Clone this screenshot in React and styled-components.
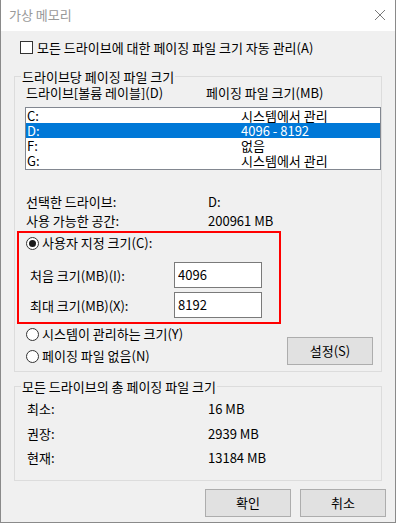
import React from 'react';
import styled, { createGlobalStyle } from 'styled-components';

const GlobalStyle = createGlobalStyle`
    * {
        box-sizing: border-box;
    }
    body {
        margin: 0;
        background: #ffffff;
        font-family: 'Noto Sans CJK KR', 'Noto Sans', sans-serif;
        font-size: 13px;
        color: #000000;
    }
`;

const drives = [
    { name: 'C:', size: '시스템에서 관리' },
    { name: 'D:', size: '4096 - 8192', selected: true },
    { name: 'F:', size: '없음' },
    { name: 'G:', size: '시스템에서 관리' },
];

const totals = [
    { label: '최소:', value: '16 MB' },
    { label: '권장:', value: '2939 MB' },
    { label: '현재:', value: '13184 MB' },
];

const App = () => {
    return (
        <>
            <GlobalStyle />
            <Window>
                <TitleBar>
                    <Title>가상 메모리</Title>
                    <CloseIcon width='12' height='12' viewBox='0 0 12 12'>
                        <path d='M1 1 L11 11 M11 1 L1 11' />
                    </CloseIcon>
                </TitleBar>

                <Body>
                    <CheckRow>
                        <CheckBox />
                        <span>모든 드라이브에 대한 페이징 파일 크기 자동 관리(A)</span>
                    </CheckRow>

                    <GroupBox $marginTop={22} $paddingBottom={6}>
                        <Legend>드라이브당 페이징 파일 크기</Legend>
                        <HeaderRow>
                            <span>드라이브[볼륨 레이블](D)</span>
                            <span>페이징 파일 크기(MB)</span>
                        </HeaderRow>

                        <ListBox>
                            {drives.map((d) => (
                                <ListRow key={d.name} $selected={d.selected}>
                                    <span>{d.name}</span>
                                    <span>{d.size}</span>
                                </ListRow>
                            ))}
                        </ListBox>

                        <InfoRow $marginTop={24}>
                            <span>선택한 드라이브:</span>
                            <span>D:</span>
                        </InfoRow>
                        <InfoRow $marginTop={3}>
                            <span>사용 가능한 공간:</span>
                            <span>200961 MB</span>
                        </InfoRow>

                        <RedFrame>
                            <RadioRow>
                                <RadioMark $checked />
                                <span>사용자 지정 크기(C):</span>
                            </RadioRow>
                            <SizeRow $marginTop={11}>
                                <SizeLabel>처음 크기(MB)(I):</SizeLabel>
                                <TextInput defaultValue='4096' />
                            </SizeRow>
                            <SizeRow $marginTop={4}>
                                <SizeLabel>최대 크기(MB)(X):</SizeLabel>
                                <TextInput defaultValue='8192' />
                            </SizeRow>
                        </RedFrame>

                        <ChoiceRow>
                            <ChoiceColumn>
                                <RadioRow>
                                    <RadioMark />
                                    <span>시스템이 관리하는 크기(Y)</span>
                                </RadioRow>
                                <RadioRow>
                                    <RadioMark />
                                    <span>페이징 파일 없음(N)</span>
                                </RadioRow>
                            </ChoiceColumn>
                            <SetButton>설정(S)</SetButton>
                        </ChoiceRow>
                    </GroupBox>

                    <GroupBox $marginTop={14} $paddingBottom={14}>
                        <Legend>모든 드라이브의 총 페이징 파일 크기</Legend>
                        <TotalList>
                            {totals.map((t) => (
                                <TotalRow key={t.label}>
                                    <span>{t.label}</span>
                                    <span>{t.value}</span>
                                </TotalRow>
                            ))}
                        </TotalList>
                    </GroupBox>

                    <ButtonBar>
                        <PushButton>확인</PushButton>
                        <PushButton>취소</PushButton>
                    </ButtonBar>
                </Body>
            </Window>
        </>
    );
};

const Window = styled.div`
    width: 396px;
    height: 523px;
    background: #f0f0f0;
    border: 1px solid #8a8a8a;
    border-top: none;
    display: flex;
    flex-direction: column;
`;

const TitleBar = styled.div`
    height: 31px;
    background: #ffffff;
    display: flex;
    align-items: center;
    justify-content: space-between;
    padding: 0 8px 1px 8px;
`;

const Title = styled.span`
    color: #999999;
    line-height: 16px;
`;

const CloseIcon = styled.svg`
    margin-right: 1px;
    path {
        stroke: #7a7a7a;
        stroke-width: 1;
        fill: none;
    }
`;

const Body = styled.div`
    padding: 0 13px;
    display: flex;
    flex-direction: column;
`;

const CheckRow = styled.div`
    margin-top: 10px;
    height: 13px;
    padding-left: 6px;
    display: flex;
    align-items: center;
    gap: 4px;
    line-height: 16px;
    white-space: nowrap;
`;

const CheckBox = styled.span`
    width: 13px;
    height: 13px;
    flex: none;
    background: #ffffff;
    border: 1px solid #333333;
`;

const GroupBox = styled.div`
    margin-top: ${(p) => p.$marginTop}px;
    border: 1px solid #dcdcdc;
    padding-bottom: ${(p) => p.$paddingBottom}px;
    display: flex;
    flex-direction: column;
`;

const Legend = styled.span`
    align-self: flex-start;
    margin: -8px 0 0 6px;
    padding: 0 1px;
    background: #f0f0f0;
    line-height: 16px;
    white-space: nowrap;
`;

const HeaderRow = styled.div`
    display: grid;
    grid-template-columns: 180px 1fr;
    padding-left: 11px;
    line-height: 16px;
`;

const ListBox = styled.div`
    margin: 6px 0 0 10px;
    height: 63px;
    background: #ffffff;
    border: 1px solid #828790;
`;

const ListRow = styled.div`
    display: grid;
    grid-template-columns: 214px 1fr;
    height: 15px;
    line-height: 15px;
    padding-left: 1px;
    white-space: nowrap;
    background: ${(p) => (p.$selected ? '#0078d7' : 'transparent')};
    color: ${(p) => (p.$selected ? '#ffffff' : '#000000')};
`;

const InfoRow = styled.div`
    margin-top: ${(p) => p.$marginTop}px;
    display: grid;
    grid-template-columns: 182px 1fr;
    padding-left: 11px;
    line-height: 16px;
`;

const RedFrame = styled.div`
    margin: 2px 0 0 2px;
    width: 264px;
    height: 93px;
    border: 2px solid #ff0000;
    padding: 2px 0 0 7px;
    display: flex;
    flex-direction: column;
`;

const RadioRow = styled.div`
    display: flex;
    align-items: center;
    gap: 3px;
    height: 16px;
    line-height: 16px;
    white-space: nowrap;
`;

const RadioMark = styled.span`
    position: relative;
    width: 13px;
    height: 13px;
    flex: none;
    border-radius: 50%;
    background: #ffffff;
    border: 1px solid #333333;
    &::after {
        content: '';
        display: ${(p) => (p.$checked ? 'block' : 'none')};
        position: absolute;
        left: 2px;
        top: 2px;
        width: 7px;
        height: 7px;
        border-radius: 50%;
        background: #1a1a1a;
    }
`;

const SizeRow = styled.div`
    margin-top: ${(p) => p.$marginTop}px;
    display: flex;
    align-items: center;
    padding-left: 4px;
`;

const SizeLabel = styled.span`
    width: 144px;
    line-height: 16px;
    padding-top: 1px;
`;

const TextInput = styled.input`
    width: 88px;
    height: 26px;
    border: 1px solid #7a7a7a;
    background: #ffffff;
    padding: 0 0 2px 3px;
    font: inherit;
    font-size: 13px;
    color: #000000;
    outline: none;
`;

const ChoiceRow = styled.div`
    margin-top: 2px;
    display: flex;
    justify-content: space-between;
    align-items: flex-start;
    padding-left: 11px;
`;

const ChoiceColumn = styled.div`
    display: flex;
    flex-direction: column;
    gap: 6px;
`;

const PushButton = styled.button`
    width: 86px;
    height: 28px;
    background: #e1e1e1;
    border: 1px solid #adadad;
    border-radius: 0;
    font: inherit;
    font-size: 13px;
    color: #000000;
    padding: 0 0 1px 0;
`;

const SetButton = styled(PushButton)`
    margin: 11px 8px 0 0;
`;

const TotalList = styled.div`
    margin-top: 6px;
    display: flex;
    flex-direction: column;
    gap: 8.5px;
`;

const TotalRow = styled.div`
    display: grid;
    grid-template-columns: 181px 1fr;
    padding-left: 12px;
    line-height: 16px;
`;

const ButtonBar = styled.div`
    margin: 8px -4px 0 0;
    display: flex;
    justify-content: flex-end;
    gap: 9px;
`;

export default App;
